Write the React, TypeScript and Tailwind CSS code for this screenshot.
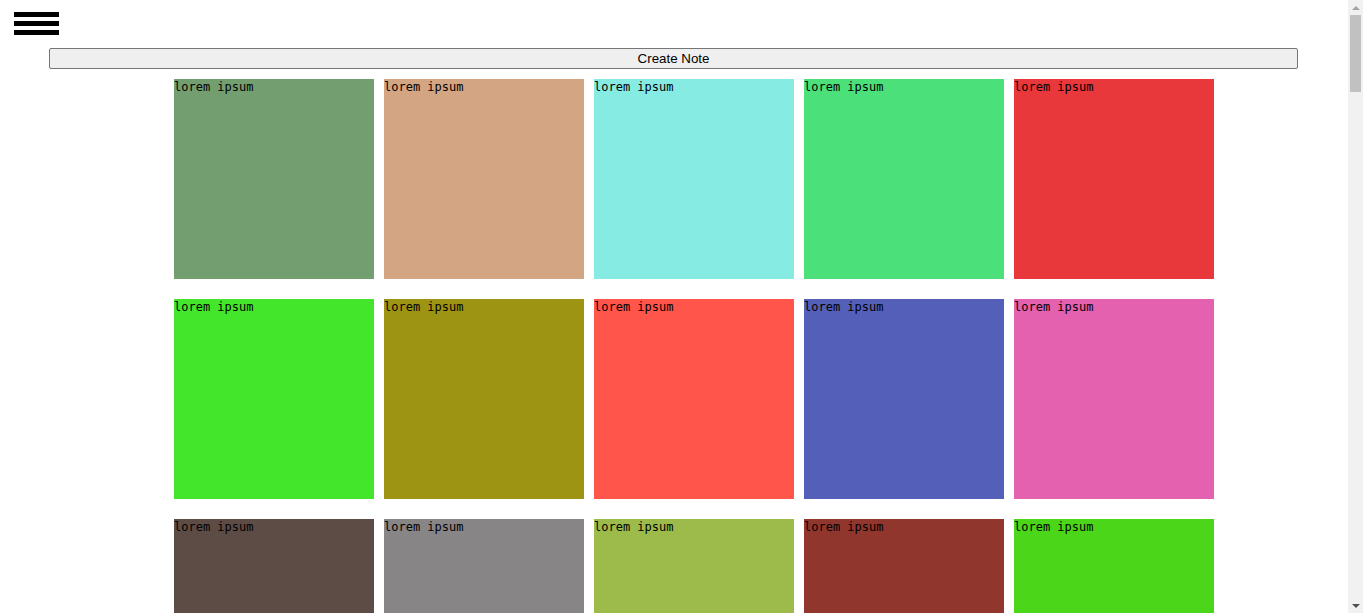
const colors = [
    "#739f70", "#d3a583", "#86ebe3", "#4ce07b", "#e8383b",
    "#44e62b", "#9e9414", "#ff554a", "#535fb8", "#e361af",
    "#5d4c46", "#878586", "#9cbb4a", "#91362c", "#4bd619",
    "#6a8fd1", "#c7b24d", "#3fa3a0", "#b45cc9", "#e89a3c",
];

// fake notes so the page scrolls like the original
const notes = [...Array(100)].map((_, i) => ({
    id: i,
    text: "lorem ipsum",
    color: i < 15 ? colors[i] : colors[(i * 7 + Math.floor(i / 20) * 3) % colors.length],
}));

function Hamburger() {
    return (
        <div className="flex flex-col gap-[4px] w-[45px]">
            <div className="h-[5px] bg-black" />
            <div className="h-[5px] bg-black" />
            <div className="h-[5px] bg-black" />
        </div>
    );
}

// the browser's own scrollbar is hidden here, so draw a classic one
function ScrollBar() {
    return (
        <div className="fixed top-0 right-0 h-screen w-[15px] bg-[#f1f1f1] flex flex-col items-center">
            <div className="h-[15px] flex items-center justify-center">
                <div className="w-0 h-0 border-x-[4px] border-x-transparent border-b-[4px] border-b-[#a3a3a3]" />
            </div>
            <div className="w-[11px] h-[77px] bg-[#c1c1c1]" />
            <div className="flex-1" />
            <div className="h-[15px] flex items-center justify-center">
                <div className="w-0 h-0 border-x-[4px] border-x-transparent border-t-[4px] border-t-[#505050]" />
            </div>
        </div>
    );
}

export default function App() {
    return (
        <main className="min-h-screen bg-white text-black pr-[15px]">
            <div className="pt-[12px] pl-[14px]">
                <Hamburger />
            </div>
            <div className="ml-[49px] mr-[50px] mt-[13px]">
                <button className="block w-full h-[21px] bg-[#efefef] border border-[#767676] rounded-[2px] text-[13.33px] leading-none font-['Liberation_Sans',Arial,sans-serif]">
                    Create Note
                </button>
            </div>
            <div className="ml-[174px] mt-[10px] w-[1040px] flex flex-wrap gap-x-[10px] gap-y-[20px] pb-[20px]">
                {notes.map((n) => (
                    <div
                        key={n.id}
                        className="w-[200px] h-[200px] text-[12px] leading-[16px] font-['DejaVu_Sans_Mono',monospace]"
                        style={{ backgroundColor: n.color }}
                    >
                        {n.text}
                    </div>
                ))}
            </div>
            <ScrollBar />
        </main>
    );
}
